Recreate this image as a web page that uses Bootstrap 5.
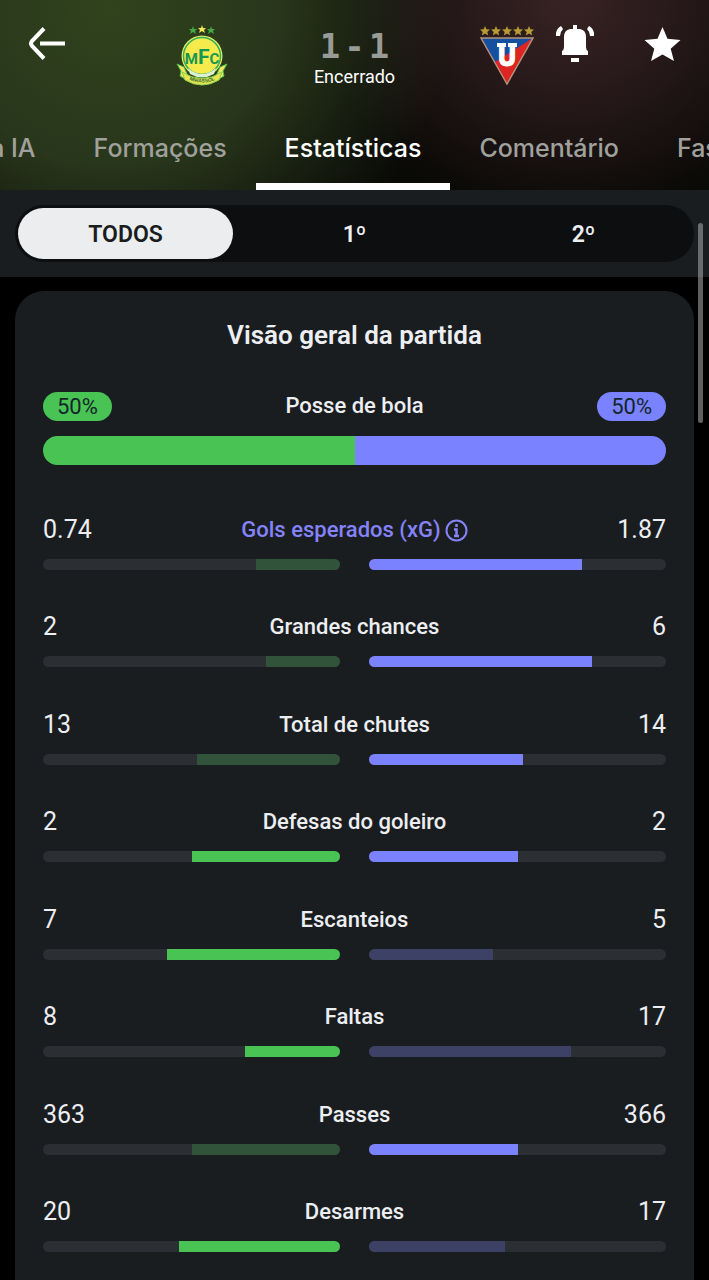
<!DOCTYPE html>
<html lang="pt-BR">
<head>
  <meta charset="UTF-8">
  <meta name="viewport" content="width=device-width, initial-scale=1.0">
  <title>Estatísticas da partida</title>
  <link href="https://cdn.jsdelivr.net/npm/bootstrap@5.3.0/dist/css/bootstrap.min.css" rel="stylesheet">
  <style>
    body {
      background: #000;
      color: #edeef2;
      font-family: Roboto, Inter, sans-serif;
    }
    .match-header {
      background:
        radial-gradient(ellipse 340px 310px at 110px 10px, #30431d 0%, #28361b 50%, rgba(14, 17, 10, 0) 100%),
        radial-gradient(ellipse 250px 220px at 570px 0, #382324 0%, #241718 50%, rgba(12, 9, 8, 0) 100%),
        #090906;
    }
    .top-row {
      display: grid;
      grid-template-columns: 1fr auto 1fr;
      height: 105px;
      padding-top: 25px;
    }
    .top-left {
      padding-left: 28px;
    }
    .top-right {
      padding: 0 28px 0 22px;
    }
    .scoreboard {
      gap: 85px;
    }
    .icon-btn {
      line-height: 0;
    }
    .score {
      gap: 4px;
      color: #999b97;
      font: bold 34px/42px "DejaVu Sans Mono", monospace;
    }
    .status {
      font-size: 18px;
      line-height: 20px;
      color: #fff;
    }
    .match-tabs a {
      height: 85px;
      padding: 0 29px;
      border-bottom: 7px solid transparent;
      color: #a0a19c;
      font: 500 25px/86px Inter, Roboto, sans-serif;
      white-space: nowrap;
      text-decoration: none;
    }
    .match-tabs a.active {
      color: #fff;
      border-color: #fff;
    }
    .period-bar {
      background: #191d20;
      padding: 15px;
    }
    .periods {
      background: #0d0e10;
      gap: 14px;
      padding: 3px;
    }
    .periods button {
      flex: 1 1 0;
      height: 51px;
      border: 0;
      background: transparent;
      color: #edeef2;
      font-size: 23px;
      font-weight: 600;
      line-height: 51px;
    }
    .periods button.active {
      background: #ecedef;
      color: #191d20;
    }
    .overview {
      background: #191d20;
      margin: 14px 15px 0;
      padding: 28px;
      border-radius: 29px 29px 0 0;
    }
    .overview h1 {
      margin: 0 0 40px;
      font-size: 26px;
      font-weight: 600;
      line-height: 32px;
    }
    .stat-label {
      font-size: 22px;
      font-weight: 500;
      line-height: 30px;
    }
    .stat-value {
      flex: 1 1 0;
      font-size: 25px;
      line-height: 30px;
    }
    .possession {
      flex: 1 1 0;
    }
    .possession span {
      display: inline-block;
      padding: 0 14px;
      border-radius: 15px;
      color: #12262a;
      font-size: 22px;
      line-height: 29px;
    }
    .possession-bar {
      height: 29px;
      margin: 15px 0 50px;
    }
    .meters {
      gap: 29px;
      margin-top: 14px;
    }
    .meter {
      flex: 1 1 0;
      height: 11px;
      background: #2b2e32;
    }
    .home { background: #49c354; }
    .away { background: #7b82ff; }
    .home.dim { background: #305339; }
    .away.dim { background: #3d4165; }
    .xg {
      color: #8583fa;
    }
    .scroll-thumb {
      top: 223px;
      right: 6px;
      width: 5px;
      height: 200px;
      background: rgba(160, 160, 160, .6);
    }
  </style>
</head>
<body>
  <div class="d-flex flex-column min-vh-100 position-relative overflow-hidden">
    <header class="match-header">
      <div class="top-row align-items-start">
        <div class="top-left">
          <button class="btn icon-btn p-0 border-0" aria-label="Voltar">
            <svg width="38" height="37" viewBox="0 0 38 37" fill="none" stroke="#fff" stroke-width="4">
              <path d="M16 3.500 4 16Q2 18.500 4 21L16 33.500M12 18.500H37"/>
            </svg>
          </button>
        </div>

        <div class="scoreboard d-flex align-items-start">
          <svg width="54" height="62" viewBox="0 0 54 62" role="img" aria-label="Mirassol">
            <g fill="#48a848">
              <path d="M18 1l1 3 3 0-2 2 1 3-3-2-3 2 1-3-2-2 3 0z"/>
              <path d="M36 1l1 3 3 0-2 2 1 3-3-2-3 2 1-3-2-2 3 0z"/>
            </g>
            <path fill="#f3e85a" d="M27 0l1 3 3 0-2 2 1 3-3-2-3 2 1-3-2-2 3 0z"/>
            <path fill="#eee95c" stroke="#4fb84f" d="M2 39l7 3 4 9-3 3-5-3 1-5zM52 39l-7 3-4 9 3 3 5-3-1-5z"/>
            <circle cx="27" cy="31" r="20.500" fill="#dfee67"/>
            <circle cx="27" cy="31" r="18.500" fill="#f5eb4c" stroke="#36ad58" stroke-width="1.500"/>
            <path d="M13 43q14 12 28 0l-2 6q-12 7-24 0z" fill="#d7f2cf"/>
            <text x="27" y="39" fill="#159653" font-family="Roboto, sans-serif" font-weight="bold" font-size="15" text-anchor="middle">M<tspan font-size="21">F</tspan>C</text>
            <path fill="#e8e554" stroke="#89cf4b" d="M7 47q20 13 40 0l-3 8q-17 10-34 0z"/>
            <path id="crest-ribbon" d="M12 54q15 7 30 0" fill="none"/>
            <text font-family="Liberation Sans, sans-serif" font-size="5" font-weight="bold" fill="#2d7033" text-anchor="middle"><textPath href="#crest-ribbon" startOffset="50%">MIRASSOL</textPath></text>
          </svg>

          <div class="text-center">
            <div class="score d-flex justify-content-center"><span>1</span><span>-</span><span>1</span></div>
            <div class="status">Encerrado</div>
          </div>

          <svg width="54" height="62" viewBox="0 0 54 62" role="img" aria-label="LDU Quito">
            <g fill="#b79b35">
              <path d="M5 1l1.400 3.300 3.600.2-2.700 2.400.9 3.500L5 8.400 1.800 10.400l.9-3.500L0 4.500l3.600-.2z"/>
              <path d="M16 1l1.400 3.300 3.600.2-2.700 2.400.9 3.500L16 8.400l-3.200 2 .9-3.500L11 4.500l3.600-.2z"/>
              <path d="M27 1l1.400 3.300 3.600.2-2.700 2.400.9 3.500L27 8.400l-3.200 2 .9-3.500L22 4.500l3.600-.2z"/>
              <path d="M38 1l1.400 3.300 3.600.2-2.700 2.400.9 3.500L38 8.400l-3.200 2 .9-3.500L33 4.500l3.600-.2z"/>
              <path d="M49 1l1.400 3.300 3.600.2-2.700 2.400.9 3.500L49 8.400l-3.200 2 .9-3.500L44 4.500l3.600-.2z"/>
            </g>
            <path d="M1 13h52L27 59z" fill="#dc2522"/>
            <path d="M1 13h52L15 37z" fill="#14509f"/>
            <path d="M1 13h52L27 59z" fill="none" stroke="#b7917b" stroke-width="1.400"/>
            <text x="27" y="41" text-anchor="middle" font-family="DejaVu Sans Mono, monospace" font-size="30" font-weight="bold" fill="#fff" stroke="#fff">U</text>
            <path d="M17 18h9v4h-9zM28 18h9v4h-9z" fill="#fff"/>
          </svg>
        </div>

        <div class="top-right d-flex justify-content-between">
          <button class="btn icon-btn p-0 border-0" aria-label="Notificações">
            <svg width="38" height="38" viewBox="0 0 38 38" fill="#fff">
              <path d="M17 0h4v4h3q6 1 6 8v10q0 3 2 4v4H6v-4q2-1 2-4V12q0-7 6-8h3zM15 33h8v4h-8z"/>
              <path d="M5 1l2 3q-3 3-3 7H0V8q1-5 5-7zM33 1l-2 3q3 3 3 7h4V8q-1-5-5-7z"/>
            </svg>
          </button>
          <button class="btn icon-btn p-0 border-0" aria-label="Favoritar">
            <svg width="37" height="37" viewBox="0 0 37 37" fill="#fff">
              <path d="M18.500 1l5 11.800L36.500 14l-9.800 8.700L30 35l-11.500-6.500L7 35l3.300-12.300L.5 14l13-1.200z"/>
            </svg>
          </button>
        </div>
      </div>

      <nav class="match-tabs d-flex justify-content-center overflow-hidden">
        <a href="#">a IA</a>
        <a href="#">Formações</a>
        <a href="#" class="active" aria-current="page">Estatísticas</a>
        <a href="#">Comentário</a>
        <a href="#">Fas</a>
      </nav>
    </header>

    <div class="period-bar">
      <div class="periods d-flex rounded-pill">
        <button class="active rounded-pill">TODOS</button>
        <button class="rounded-pill">1º</button>
        <button class="rounded-pill">2º</button>
      </div>
    </div>

    <main class="overview flex-grow-1 d-flex flex-column">
      <h1 class="text-center">Visão geral da partida</h1>

      <div class="d-flex align-items-center">
        <div class="possession"><span class="home">50%</span></div>
        <div class="stat-label">Posse de bola</div>
        <div class="possession text-end"><span class="away">50%</span></div>
      </div>
      <div class="possession-bar d-flex rounded-pill overflow-hidden">
        <div class="home w-50"></div>
        <div class="away w-50"></div>
      </div>

      <div class="stats flex-grow-1 d-flex flex-column justify-content-between"></div>
    </main>

    <div class="scroll-thumb position-absolute rounded-pill"></div>
  </div>

  <script src="https://cdn.jsdelivr.net/npm/bootstrap@5.3.0/dist/js/bootstrap.bundle.min.js"></script>

  <script>
    const stats = [
      { label: "Gols esperados (xG)", home: "0.74", away: "1.87", info: true },
      { label: "Grandes chances", home: "2", away: "6" },
      { label: "Total de chutes", home: "13", away: "14" },
      { label: "Defesas do goleiro", home: "2", away: "2" },
      { label: "Escanteios", home: "7", away: "5" },
      { label: "Faltas", home: "8", away: "17", lowerWins: true },
      { label: "Passes", home: "363", away: "366" },
      { label: "Desarmes", home: "20", away: "17" }
    ];

    const infoIcon = `
      <svg width="23" height="23" viewBox="0 0 23 23" fill="none" stroke="currentColor" stroke-width="2">
        <circle cx="11.500" cy="11.500" r="10"/>
        <path d="M11.500 5v3M9 10.500h2.500V17M9 17h5" stroke-width="2.500"/>
      </svg>`;

    document.querySelector(".stats").innerHTML = stats.map((stat) => {
      const home = Number(stat.home);
      const away = Number(stat.away);
      const share = home / (home + away) * 100;
      // the bar of the side that is behind is dimmed
      const homeBehind = stat.lowerWins ? home > away : home < away;
      const awayBehind = stat.lowerWins ? away > home : away < home;
      const label = stat.info
        ? `<a href="#" class="stat-label xg d-flex align-items-center gap-1 text-decoration-none">${stat.label} ${infoIcon}</a>`
        : `<div class="stat-label">${stat.label}</div>`;

      return `
        <div>
          <div class="d-flex align-items-center">
            <div class="stat-value">${stat.home}</div>
            ${label}
            <div class="stat-value text-end">${stat.away}</div>
          </div>
          <div class="meters d-flex">
            <div class="meter d-flex justify-content-end rounded-pill overflow-hidden">
              <div class="home ${homeBehind ? "dim" : ""}" style="width: ${share}%"></div>
            </div>
            <div class="meter d-flex rounded-pill overflow-hidden">
              <div class="away ${awayBehind ? "dim" : ""}" style="width: ${100 - share}%"></div>
            </div>
          </div>
        </div>`;
    }).join("");
  </script>
</body>
</html>
